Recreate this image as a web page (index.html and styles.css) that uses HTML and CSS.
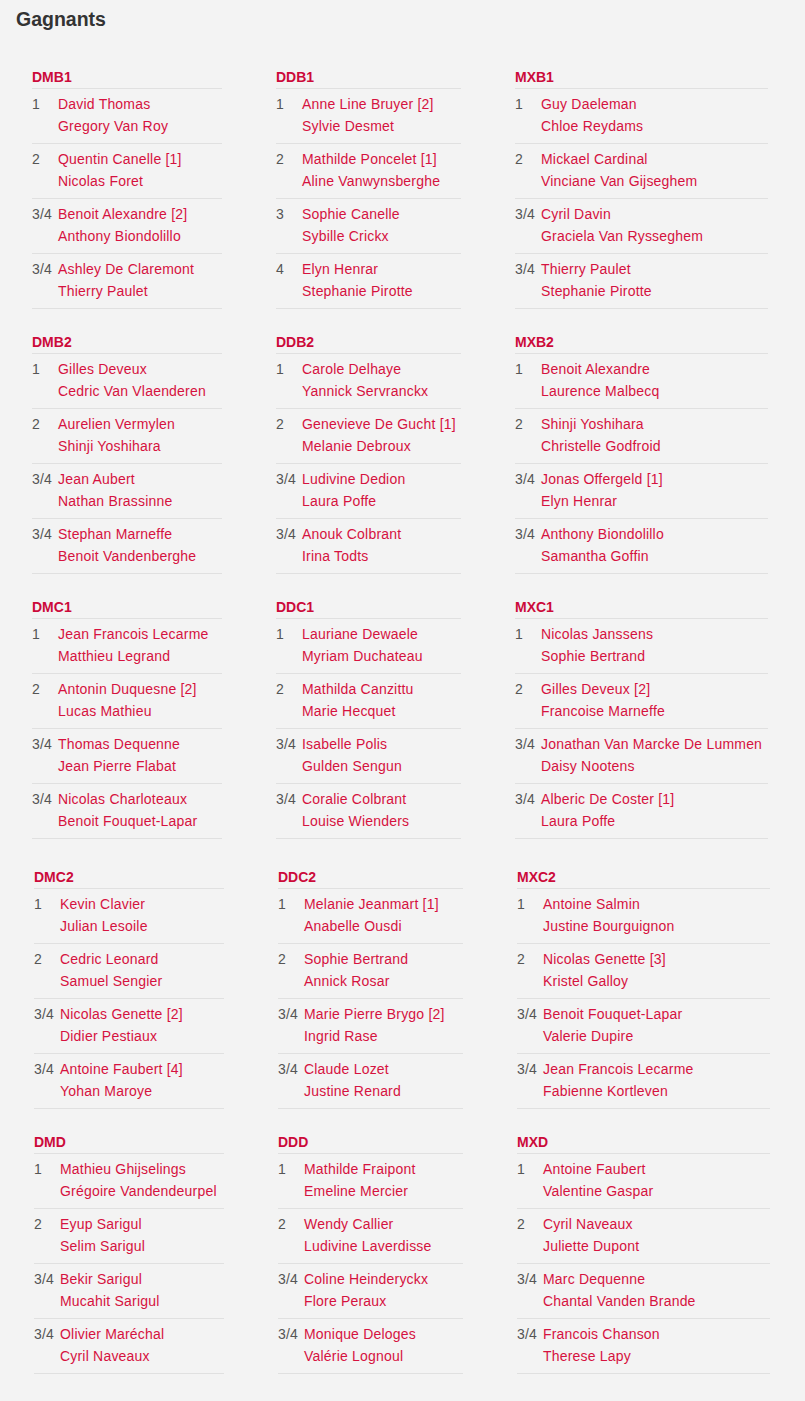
FILE: index.html
```html
<!DOCTYPE html>
<html lang="fr">
<head>
<meta charset="utf-8">
<title>Gagnants</title>
<link rel="stylesheet" href="styles.css">
</head>
<body>
<div class="page">
  <h1 class="title">Gagnants</h1>

  <div class="grid">
    <div class="group">
      <div class="group-title">DMB1</div>
      <div class="entry"><span class="rank">1</span><div class="names"><span>David Thomas</span><span>Gregory Van Roy</span></div></div>
      <div class="entry"><span class="rank">2</span><div class="names"><span>Quentin Canelle [1]</span><span>Nicolas Foret</span></div></div>
      <div class="entry"><span class="rank">3/4</span><div class="names"><span>Benoit Alexandre [2]</span><span>Anthony Biondolillo</span></div></div>
      <div class="entry"><span class="rank">3/4</span><div class="names"><span>Ashley De Claremont</span><span>Thierry Paulet</span></div></div>
    </div>
    <div class="group">
      <div class="group-title">DDB1</div>
      <div class="entry"><span class="rank">1</span><div class="names"><span>Anne Line Bruyer [2]</span><span>Sylvie Desmet</span></div></div>
      <div class="entry"><span class="rank">2</span><div class="names"><span>Mathilde Poncelet [1]</span><span>Aline Vanwynsberghe</span></div></div>
      <div class="entry"><span class="rank">3</span><div class="names"><span>Sophie Canelle</span><span>Sybille Crickx</span></div></div>
      <div class="entry"><span class="rank">4</span><div class="names"><span>Elyn Henrar</span><span>Stephanie Pirotte</span></div></div>
    </div>
    <div class="group">
      <div class="group-title">MXB1</div>
      <div class="entry"><span class="rank">1</span><div class="names"><span>Guy Daeleman</span><span>Chloe Reydams</span></div></div>
      <div class="entry"><span class="rank">2</span><div class="names"><span>Mickael Cardinal</span><span>Vinciane Van Gijseghem</span></div></div>
      <div class="entry"><span class="rank">3/4</span><div class="names"><span>Cyril Davin</span><span>Graciela Van Rysseghem</span></div></div>
      <div class="entry"><span class="rank">3/4</span><div class="names"><span>Thierry Paulet</span><span>Stephanie Pirotte</span></div></div>
    </div>

    <div class="group">
      <div class="group-title">DMB2</div>
      <div class="entry"><span class="rank">1</span><div class="names"><span>Gilles Deveux</span><span>Cedric Van Vlaenderen</span></div></div>
      <div class="entry"><span class="rank">2</span><div class="names"><span>Aurelien Vermylen</span><span>Shinji Yoshihara</span></div></div>
      <div class="entry"><span class="rank">3/4</span><div class="names"><span>Jean Aubert</span><span>Nathan Brassinne</span></div></div>
      <div class="entry"><span class="rank">3/4</span><div class="names"><span>Stephan Marneffe</span><span>Benoit Vandenberghe</span></div></div>
    </div>
    <div class="group">
      <div class="group-title">DDB2</div>
      <div class="entry"><span class="rank">1</span><div class="names"><span>Carole Delhaye</span><span>Yannick Servranckx</span></div></div>
      <div class="entry"><span class="rank">2</span><div class="names"><span>Genevieve De Gucht [1]</span><span>Melanie Debroux</span></div></div>
      <div class="entry"><span class="rank">3/4</span><div class="names"><span>Ludivine Dedion</span><span>Laura Poffe</span></div></div>
      <div class="entry"><span class="rank">3/4</span><div class="names"><span>Anouk Colbrant</span><span>Irina Todts</span></div></div>
    </div>
    <div class="group">
      <div class="group-title">MXB2</div>
      <div class="entry"><span class="rank">1</span><div class="names"><span>Benoit Alexandre</span><span>Laurence Malbecq</span></div></div>
      <div class="entry"><span class="rank">2</span><div class="names"><span>Shinji Yoshihara</span><span>Christelle Godfroid</span></div></div>
      <div class="entry"><span class="rank">3/4</span><div class="names"><span>Jonas Offergeld [1]</span><span>Elyn Henrar</span></div></div>
      <div class="entry"><span class="rank">3/4</span><div class="names"><span>Anthony Biondolillo</span><span>Samantha Goffin</span></div></div>
    </div>

    <div class="group">
      <div class="group-title">DMC1</div>
      <div class="entry"><span class="rank">1</span><div class="names"><span>Jean Francois Lecarme</span><span>Matthieu Legrand</span></div></div>
      <div class="entry"><span class="rank">2</span><div class="names"><span>Antonin Duquesne [2]</span><span>Lucas Mathieu</span></div></div>
      <div class="entry"><span class="rank">3/4</span><div class="names"><span>Thomas Dequenne</span><span>Jean Pierre Flabat</span></div></div>
      <div class="entry"><span class="rank">3/4</span><div class="names"><span>Nicolas Charloteaux</span><span>Benoit Fouquet-Lapar</span></div></div>
    </div>
    <div class="group">
      <div class="group-title">DDC1</div>
      <div class="entry"><span class="rank">1</span><div class="names"><span>Lauriane Dewaele</span><span>Myriam Duchateau</span></div></div>
      <div class="entry"><span class="rank">2</span><div class="names"><span>Mathilda Canzittu</span><span>Marie Hecquet</span></div></div>
      <div class="entry"><span class="rank">3/4</span><div class="names"><span>Isabelle Polis</span><span>Gulden Sengun</span></div></div>
      <div class="entry"><span class="rank">3/4</span><div class="names"><span>Coralie Colbrant</span><span>Louise Wienders</span></div></div>
    </div>
    <div class="group">
      <div class="group-title">MXC1</div>
      <div class="entry"><span class="rank">1</span><div class="names"><span>Nicolas Janssens</span><span>Sophie Bertrand</span></div></div>
      <div class="entry"><span class="rank">2</span><div class="names"><span>Gilles Deveux [2]</span><span>Francoise Marneffe</span></div></div>
      <div class="entry"><span class="rank">3/4</span><div class="names"><span>Jonathan Van Marcke De Lummen</span><span>Daisy Nootens</span></div></div>
      <div class="entry"><span class="rank">3/4</span><div class="names"><span>Alberic De Coster [1]</span><span>Laura Poffe</span></div></div>
    </div>
  </div>

  <div class="grid grid-second">
    <div class="group">
      <div class="group-title">DMC2</div>
      <div class="entry"><span class="rank">1</span><div class="names"><span>Kevin Clavier</span><span>Julian Lesoile</span></div></div>
      <div class="entry"><span class="rank">2</span><div class="names"><span>Cedric Leonard</span><span>Samuel Sengier</span></div></div>
      <div class="entry"><span class="rank">3/4</span><div class="names"><span>Nicolas Genette [2]</span><span>Didier Pestiaux</span></div></div>
      <div class="entry"><span class="rank">3/4</span><div class="names"><span>Antoine Faubert [4]</span><span>Yohan Maroye</span></div></div>
    </div>
    <div class="group">
      <div class="group-title">DDC2</div>
      <div class="entry"><span class="rank">1</span><div class="names"><span>Melanie Jeanmart [1]</span><span>Anabelle Ousdi</span></div></div>
      <div class="entry"><span class="rank">2</span><div class="names"><span>Sophie Bertrand</span><span>Annick Rosar</span></div></div>
      <div class="entry"><span class="rank">3/4</span><div class="names"><span>Marie Pierre Brygo [2]</span><span>Ingrid Rase</span></div></div>
      <div class="entry"><span class="rank">3/4</span><div class="names"><span>Claude Lozet</span><span>Justine Renard</span></div></div>
    </div>
    <div class="group">
      <div class="group-title">MXC2</div>
      <div class="entry"><span class="rank">1</span><div class="names"><span>Antoine Salmin</span><span>Justine Bourguignon</span></div></div>
      <div class="entry"><span class="rank">2</span><div class="names"><span>Nicolas Genette [3]</span><span>Kristel Galloy</span></div></div>
      <div class="entry"><span class="rank">3/4</span><div class="names"><span>Benoit Fouquet-Lapar</span><span>Valerie Dupire</span></div></div>
      <div class="entry"><span class="rank">3/4</span><div class="names"><span>Jean Francois Lecarme</span><span>Fabienne Kortleven</span></div></div>
    </div>

    <div class="group">
      <div class="group-title">DMD</div>
      <div class="entry"><span class="rank">1</span><div class="names"><span>Mathieu Ghijselings</span><span>Grégoire Vandendeurpel</span></div></div>
      <div class="entry"><span class="rank">2</span><div class="names"><span>Eyup Sarigul</span><span>Selim Sarigul</span></div></div>
      <div class="entry"><span class="rank">3/4</span><div class="names"><span>Bekir Sarigul</span><span>Mucahit Sarigul</span></div></div>
      <div class="entry"><span class="rank">3/4</span><div class="names"><span>Olivier Maréchal</span><span>Cyril Naveaux</span></div></div>
    </div>
    <div class="group">
      <div class="group-title">DDD</div>
      <div class="entry"><span class="rank">1</span><div class="names"><span>Mathilde Fraipont</span><span>Emeline Mercier</span></div></div>
      <div class="entry"><span class="rank">2</span><div class="names"><span>Wendy Callier</span><span>Ludivine Laverdisse</span></div></div>
      <div class="entry"><span class="rank">3/4</span><div class="names"><span>Coline Heinderyckx</span><span>Flore Peraux</span></div></div>
      <div class="entry"><span class="rank">3/4</span><div class="names"><span>Monique Deloges</span><span>Valérie Lognoul</span></div></div>
    </div>
    <div class="group">
      <div class="group-title">MXD</div>
      <div class="entry"><span class="rank">1</span><div class="names"><span>Antoine Faubert</span><span>Valentine Gaspar</span></div></div>
      <div class="entry"><span class="rank">2</span><div class="names"><span>Cyril Naveaux</span><span>Juliette Dupont</span></div></div>
      <div class="entry"><span class="rank">3/4</span><div class="names"><span>Marc Dequenne</span><span>Chantal Vanden Brande</span></div></div>
      <div class="entry"><span class="rank">3/4</span><div class="names"><span>Francois Chanson</span><span>Therese Lapy</span></div></div>
    </div>
  </div>
</div>
</body>
</html>
```
FILE: styles.css
```css
html, body {
  margin: 0;
  padding: 0;
  background: #f3f3f3;
}
body {
  font-family: "Liberation Sans", Arial, sans-serif;
  font-size: 14px;
  color: #555;
}
.page {
  padding: 7px 16px 28px 16px;
}
.title {
  margin: 0;
  font-size: 19.5px;
  line-height: 24px;
  font-weight: bold;
  color: #333;
}
.grid {
  display: grid;
  grid-template-columns: 190px 185px 253px;
  column-gap: 54px;
  row-gap: 22px;
  margin: 35px 0 0 16px;
}
.grid-second {
  margin-top: 27px;
  padding-left: 2px;
}
.group-title {
  font-weight: bold;
  font-size: 14px;
  line-height: 22px;
  color: #cc0a3a;
  border-bottom: 1px solid #e0e0e0;
}
.entry {
  display: flex;
  padding: 4px 0 6px 0;
  line-height: 22px;
  border-bottom: 1px solid #e0e0e0;
}
.rank {
  flex: 0 0 26px;
  color: #555;
  letter-spacing: 0.2px;
}
.names {
  display: flex;
  flex-direction: column;
  color: #d6123f;
  white-space: nowrap;
  letter-spacing: 0.2px;
}
```
